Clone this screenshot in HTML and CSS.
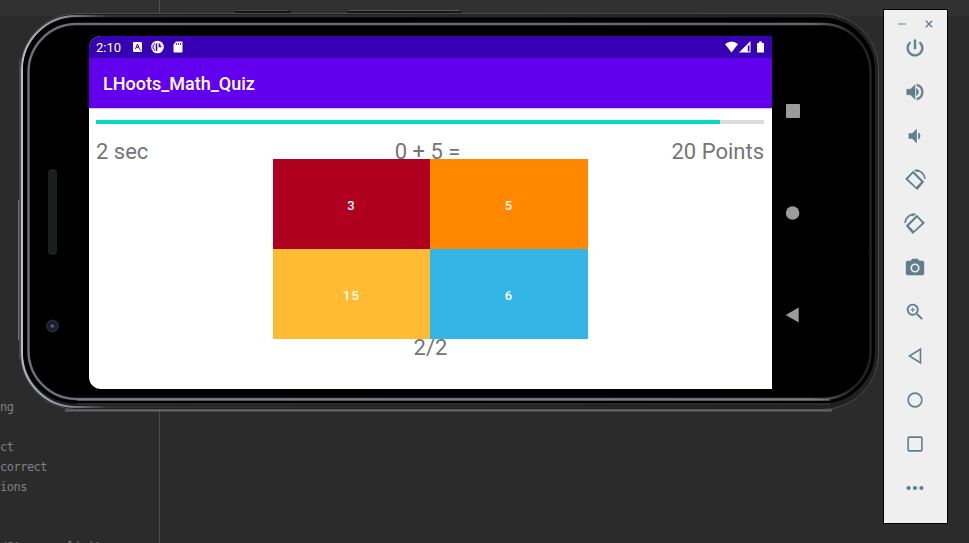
FILE: index.html
```html
<!DOCTYPE html>
<html lang="en">
<head>
<meta charset="utf-8">
<title>LHoots_Math_Quiz</title>
<link rel="stylesheet" href="styles.css">
</head>
<body>
<main class="desktop">
  <div class="ide-bar"></div>
  <div class="guide"></div>
  <div class="code">
    <span>ng</span><span></span><span>ct</span><span>correct</span><span>ions</span><span></span><span></span><span>/Stz      limit</span>
  </div>

  <section class="phone">
    <svg class="frame" viewBox="0 0 866 406" aria-hidden="true">
      <defs>
        <linearGradient id="side" x1="0" x2="1" y1="0" y2="0">
          <stop offset="0" stop-color="#b9bcc0"/><stop offset=".05" stop-color="#8d9094"/><stop offset=".1" stop-color="#303132"/><stop offset="1" stop-color="#222"/>
        </linearGradient>
        <linearGradient id="rim" x1="0" x2="1" y1="0" y2="0">
          <stop offset="0" stop-color="#6c6e74"/><stop offset=".93" stop-color="#66686d"/><stop offset=".98" stop-color="#222"/><stop offset="1" stop-color="#222"/>
        </linearGradient>
      </defs>
      <rect x="220" y="1" width="56" height="5" rx="2" fill="#151515"/>
      <path d="M221 1.5h53" stroke="#444"/>
      <rect x="333" y="1" width="113" height="5" rx="2" fill="#151515"/>
      <path d="M334 1.5h111" stroke="#5a5a5a"/>
      <path d="M4.500 50v300" stroke="#4a4a4a"/>
      <path d="M3.500 191v140" stroke="#707070"/>
      <rect x="5.500" y="4.500" width="858" height="396" rx="56" fill="#1e1f20" stroke="#4b4b4b"/>
      <rect x="7" y="7" width="854" height="391" rx="54" fill="none" stroke="url(#side)" stroke-width="2"/>
      <rect x="9" y="9.500" width="850" height="384" rx="52" fill="#000" stroke="#000" stroke-width="2"/>
      <rect x="13.500" y="15" width="842" height="375" rx="48" fill="#000" stroke="url(#rim)" stroke-width="2.500"/>
      <path d="M62 391h753" stroke="#909399"/>
      <path d="M62 395h753" stroke="#414141"/>
      <path d="M50 401.500h767" stroke="#666" stroke-width="2"/>
      <rect x="33" y="160" width="9" height="86" rx="4" fill="#1c1d1d"/>
      <circle cx="37.500" cy="317" r="6.500" fill="#252628"/>
      <circle cx="37.500" cy="317" r="4" fill="#15182a"/>
      <circle cx="37.500" cy="317" r="2.500" fill="#283861"/>
      <circle cx="37" cy="317" r="1" fill="#69799c"/>
    </svg>
    <div class="screen">
      <header class="status">
        <span class="clock">2:10</span>
        <svg class="notices" viewBox="0 0 54 14" aria-hidden="true">
          <rect x="2" y="2" width="9" height="10" rx="1" fill="#fff"/>
          <path d="M4.500 9l2-5 2 5M5.300 7.300h2.400M8.500 10h1.500" fill="none" stroke="#3700b3"/>
          <circle cx="26.500" cy="7" r="6.300" fill="#fff"/>
          <path d="M25.500 3.500v7.500M28.500 3.500v3h2" fill="none" stroke="#3700b3" stroke-width="1.600"/>
          <path d="M24 3.500a4 4 0 0 0 0 7" fill="none" stroke="#3700b3"/>
          <path d="M45 1.500h5.500q1 0 1 1v9q0 1-1 1h-7q-1 0-1-1v-7z" fill="#fff"/>
          <path d="M45.500 3v2M47.500 3v2M49.500 3v2" stroke="#3700b3" stroke-width=".8"/>
        </svg>
        <svg class="signals" viewBox="0 0 42 14" aria-hidden="true">
          <path d="M1 4q6.500-5 13 0L7.500 12.500z" fill="#fff"/>
          <path d="M26.500 1v11.500H15z" fill="#fff"/><path d="M23.800 5.500v6h1.700v-6z" fill="#3700b3"/>
          <path d="M35 1.500h3V3h2v9.500h-7V3h2z" fill="#fff"/>
        </svg>
      </header>
      <div class="appbar">LHoots_Math_Quiz</div>
      <div class="content">
        <div class="progress"><div class="progress-value"></div></div>
        <div class="facts"><span>2 sec</span><span class="question">0 + 5 =</span><span class="points">20 Points</span></div>
        <div class="answers">
          <div class="answer red">3</div><div class="answer orange">5</div>
          <div class="answer yellow">15</div><div class="answer blue">6</div>
        </div>
        <div class="count">2/2</div>
      </div>
    </div>
    <nav class="phone-nav">
      <svg viewBox="0 0 16 16"><rect x="1" y="1" width="14" height="14" rx="1"/></svg>
      <svg viewBox="0 0 16 16"><circle cx="7.600" cy="8" r="6.800"/></svg>
      <svg viewBox="0 0 16 16"><path d="M.7 8L13.700.5v15z"/></svg>
    </nav>
  </section>

  <aside class="tools">
    <div class="window-controls">
      <svg viewBox="0 0 8 8"><path d="M0 4h8" opacity=".65"/></svg>
      <svg viewBox="0 0 8 8"><path d="M.8.800l6.400 6.400M7.200.800L.8 7.200"/></svg>
    </div>
    <svg class="tool" viewBox="0 0 24 24"><path d="M13 3h-2v10h2zM17.830 5.170l-1.420 1.420A6.920 6.920 0 0 1 19 12a7 7 0 1 1-11.420-5.420L6.170 5.170A8.960 8.960 0 0 0 3 12a9 9 0 1 0 14.830-6.830z" stroke="currentColor" stroke-width=".6"/></svg>
    <svg class="tool" viewBox="0 0 24 24"><path d="M3 9v6h4l5 5V4L7 9zm10.500-1v8a4.500 4.500 0 0 0 0-8zM14 3.230v2.060a7 7 0 0 1 0 13.420v2.060a9 9 0 0 0 0-17.540z" stroke="currentColor" stroke-width=".5"/></svg>
    <svg class="tool" viewBox="0 0 24 24"><path d="M5 9v6h4l5 5V4L9 9zm10.500-1v8a4.500 4.500 0 0 0 0-8z"/></svg>
    <svg class="tool" viewBox="0 0 24 24"><path fill-rule="evenodd" d="M1.200 10.800L10 2l12 11.800L14.500 23zM4.300 10.800l9 8.800 5.500-5.600-9-9z"/><path class="line" d="M11.500 1.700C17 .5 22.500 5 22.800 11"/><path d="M11.500 1l4-.2-1 3z"/></svg>
    <svg class="tool" viewBox="0 0 24 24"><g transform="matrix(-1 0 0 1 24 0)"><path fill-rule="evenodd" d="M1.200 10.800L10 2l12 11.800L14.500 23zM4.300 10.800l9 8.800 5.500-5.600-9-9z"/><path class="line" d="M11.500 1.700C17 .5 22.500 5 22.800 11"/><path d="M11.500 1l4-.2-1 3z"/></g></svg>
    <svg class="tool" viewBox="0 0 24 24"><path fill-rule="evenodd" d="M9 2L7.200 4H4a2 2 0 0 0-2 2v12a2 2 0 0 0 2 2h16a2 2 0 0 0 2-2V6a2 2 0 0 0-2-2h-3.200L15 2zm3 5a5 5 0 1 1 0 10 5 5 0 0 1 0-10z"/><circle cx="12" cy="12" r="3.200"/></svg>
    <svg class="tool" viewBox="0 0 24 24"><path d="M15.500 14h-.79l-.28-.27A6.500 6.500 0 1 0 13.730 14.430l.27.280v.79l5 4.990L20.490 19zm-6 0a4.500 4.500 0 1 1 0-9 4.500 4.500 0 0 1 0 9zM12 10h-2v2H9v-2H7V9h2V7h1v2h2z"/></svg>
    <svg class="tool" viewBox="0 0 24 24"><path class="line" d="M6 12l12-7.500v15z"/></svg>
    <svg class="tool" viewBox="0 0 24 24"><circle class="line" cx="12" cy="12" r="7.500"/></svg>
    <svg class="tool" viewBox="0 0 24 24"><rect class="line" x="4.500" y="4.500" width="15" height="15" rx="1"/></svg>
    <svg class="tool" viewBox="0 0 24 24"><circle cx="5" cy="12" r="2.300"/><circle cx="12" cy="12" r="2.300"/><circle cx="19" cy="12" r="2.300"/></svg>
  </aside>
</main>
</body>
</html>
```
FILE: styles.css
```css
* { box-sizing: border-box; }
body { margin: 0; font-family: Roboto, sans-serif; }
svg { display: block; }
.desktop { position: relative; width: 969px; height: 543px; overflow: hidden; background: #2b2b2b; }
.ide-bar { height: 16px; background: #313131; }
.guide { position: absolute; left: 159px; top: 0; width: 1px; height: 543px; background: #4d4d4d; }
.code { position: absolute; left: 0; top: 397px; display: flex; flex-direction: column; font: 12px/20px "DejaVu Sans Mono", monospace; letter-spacing: -.5px; color: #808080; white-space: pre; }
.code span { height: 20px; }

.phone { position: absolute; left: 15px; top: 9px; width: 866px; height: 406px; display: flex; padding: 27px 0 0 74px; }
.frame { position: absolute; inset: 0; width: 866px; height: 406px; }
.screen { position: relative; width: 683px; height: 353px; overflow: hidden; background: #fff; border-radius: 12px 0 0 12px; }
.status { display: flex; align-items: center; height: 22px; padding: 0 6px 0 7px; background: #3700b3; color: #fff; }
.clock { width: 35px; font-size: 13px; }
.notices { width: 54px; height: 14px; }
.signals { width: 42px; height: 14px; margin-left: auto; }
.appbar { position: relative; height: 50px; padding-left: 14px; background: #6200ee; color: #fff; font-size: 18px; font-weight: 500; line-height: 52px; box-shadow: 0 1px 1px #0003; }
.content { padding: 12px 8px 0 7px; color: #757575; font-size: 22px; }
.progress { height: 4px; margin-top: 0; background: #dcdcdc; }
.progress-value { width: 624px; height: 4px; background: #03dac5; }
.facts { display: grid; grid-template-columns: 1fr auto 1fr; height: 35px; padding-top: 15px; line-height: 26px; }
.question { margin-right: 5px; }
.points { text-align: right; }
.answers { position: relative; display: grid; grid-template-columns: 157px 158px; grid-template-rows: 90px 90px; width: 315px; margin-left: 177px; }
.answer { display: flex; align-items: center; justify-content: center; color: #fff; font-size: 13px; font-weight: 500; letter-spacing: 1px; padding-top: 2px; }
.red { background: #b00020; }
.orange { background: #ff8800; }
.yellow { background: #ffbb33; }
.blue { background: #33b5e5; }
.count { margin-left: 177px; width: 315px; text-align: center; line-height: 26px; margin-top: -4px; }
.phone-nav { position: relative; display: flex; flex-direction: column; gap: 86px; padding: 67px 0 0 13px; fill: #9b9b9b; }
.phone-nav svg { width: 16px; height: 16px; }

.tools { position: absolute; left: 883px; top: 9px; width: 65px; height: 515px; display: flex; flex-direction: column; align-items: center; gap: 20px; padding: 10px 1px 0 0; border: 1px solid #000; background: #efefef; color: #607d8b; fill: currentColor; }
.window-controls { display: flex; gap: 19px; height: 8px; margin-bottom: -12px; padding-left: 0; }
.window-controls svg { width: 8px; height: 8px; fill: none; stroke: currentColor; stroke-width: 1.4; }
.tool { flex: none; width: 24px; height: 24px; padding: 1px; }
.tool .line { fill: none; stroke: currentColor; stroke-width: 1.7; }
```
